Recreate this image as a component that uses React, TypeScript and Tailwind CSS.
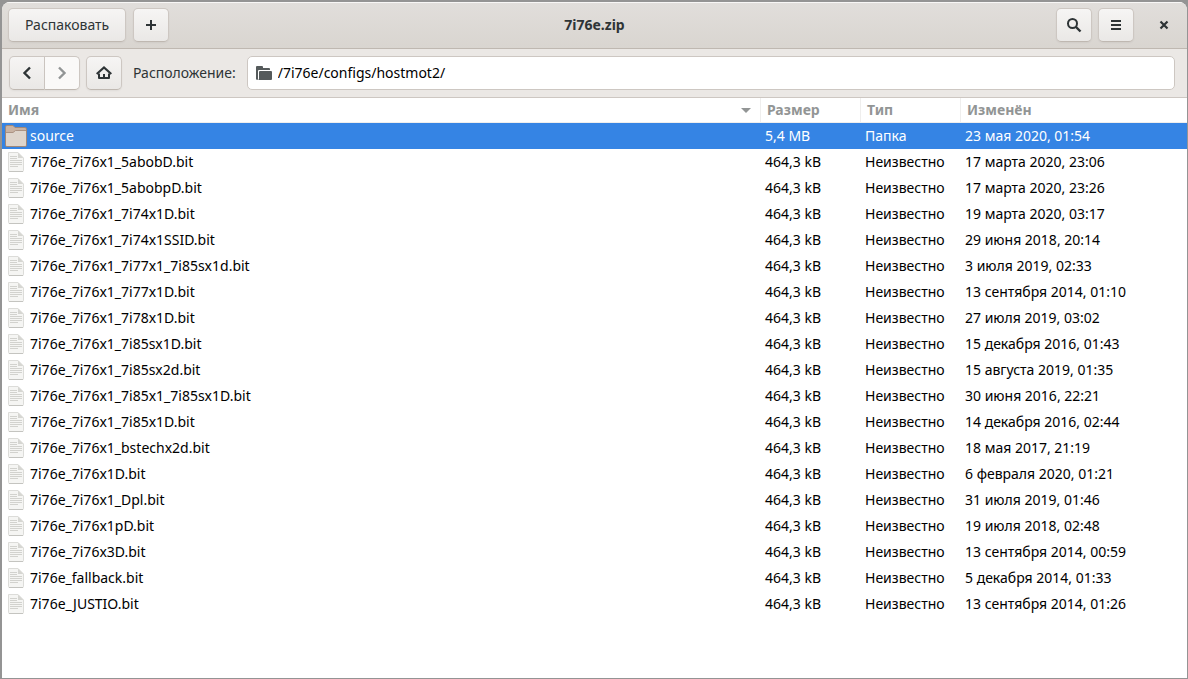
import type { ReactNode } from "react";

type FileEntry = { name: string; modified: string };

const files: FileEntry[] = [
  { name: "7i76e_7i76x1_5abobD.bit", modified: "17 марта 2020, 23:06" },
  { name: "7i76e_7i76x1_5abobpD.bit", modified: "17 марта 2020, 23:26" },
  { name: "7i76e_7i76x1_7i74x1D.bit", modified: "19 марта 2020, 03:17" },
  { name: "7i76e_7i76x1_7i74x1SSID.bit", modified: "29 июня 2018, 20:14" },
  { name: "7i76e_7i76x1_7i77x1_7i85sx1d.bit", modified: "3 июля 2019, 02:33" },
  { name: "7i76e_7i76x1_7i77x1D.bit", modified: "13 сентября 2014, 01:10" },
  { name: "7i76e_7i76x1_7i78x1D.bit", modified: "27 июля 2019, 03:02" },
  { name: "7i76e_7i76x1_7i85sx1D.bit", modified: "15 декабря 2016, 01:43" },
  { name: "7i76e_7i76x1_7i85sx2d.bit", modified: "15 августа 2019, 01:35" },
  { name: "7i76e_7i76x1_7i85x1_7i85sx1D.bit", modified: "30 июня 2016, 22:21" },
  { name: "7i76e_7i76x1_7i85x1D.bit", modified: "14 декабря 2016, 02:44" },
  { name: "7i76e_7i76x1_bstechx2d.bit", modified: "18 мая 2017, 21:19" },
  { name: "7i76e_7i76x1D.bit", modified: "6 февраля 2020, 01:21" },
  { name: "7i76e_7i76x1_Dpl.bit", modified: "31 июля 2019, 01:46" },
  { name: "7i76e_7i76x1pD.bit", modified: "19 июля 2018, 02:48" },
  { name: "7i76e_7i76x3D.bit", modified: "13 сентября 2014, 00:59" },
  { name: "7i76e_fallback.bit", modified: "5 декабря 2014, 01:33" },
  { name: "7i76e_JUSTIO.bit", modified: "13 сентября 2014, 01:26" },
];

const buttonLook =
  "flex h-[34px] items-center justify-center border border-[#cdc7c2] border-b-[#bfb8b1] bg-linear-to-b from-[#f6f5f4] to-[#eae8e6] shadow-xs";

function IconButton({
  label,
  className = "w-9 rounded-[5px]",
  disabled,
  children,
}: {
  label: string;
  className?: string;
  disabled?: boolean;
  children: ReactNode;
}) {
  return (
    <button
      type="button"
      aria-label={label}
      disabled={disabled}
      className={`${buttonLook} ${className}`}
    >
      <svg width="16" height="16" viewBox="0 0 16 16" fill="none" aria-hidden="true">
        {children}
      </svg>
    </button>
  );
}

function FolderIcon() {
  return (
    <svg width="22" height="22" viewBox="0 0 22 22" className="shrink-0" aria-hidden="true">
      <path d="M.5 20V2Q.5.5 2 .5H8L10 2.500H20Q21.500 2.500 21.500 4V20Q21.500 21.500 20 21.500H2Q.5 21.500.5 20Z" fill="#c9b3a3" stroke="#a08878" />
      <path d="M1 8.500Q1 7.500 2 7.500H8L10.500 5.500H20Q21 5.500 21 6.500V20Q21 21 20 21H2Q1 21 1 20Z" fill="#ded5cc" />
      <path d="M1 7.500H8L10.500 5.500H21" fill="none" stroke="#ab9383" />
    </svg>
  );
}

function DocumentIcon() {
  return (
    <svg width="22" height="22" viewBox="0 0 22 22" className="shrink-0" aria-hidden="true">
      <path d="M3.500 1.500H13L18.500 7V19.500Q18.500 20.500 17.500 20.500H4.500Q3.500 20.500 3.500 19.500Z" fill="#f5f5f3" stroke="#dcdcd9" />
      <path d="M13 1.500V7H18.500Z" fill="#d6d6d2" />
      <path d="M4 20.500H18" stroke="#c4c4c0" />
      <path d="M5 5.500H12M5 7.500H12M5 9.500H17M5 11.500H17M5 13.500H17M5 15.500H13" stroke="#d2d2ce" />
    </svg>
  );
}

export default function App() {
  return (
    <div className="flex h-screen flex-col bg-[#949494] pt-[2px] pr-px pb-px pl-[2px] font-['Noto_Sans',sans-serif] text-[14px] leading-5 text-[#2e3436]">
      <main className="flex min-h-0 flex-1 flex-col overflow-hidden rounded-t-lg bg-white">
        <header className="grid h-[47px] shrink-0 grid-cols-[1fr_auto_1fr] items-center border-t border-b border-t-[#f8f7f6] border-b-[#bfb8b1] bg-linear-to-b from-[#e1dedb] to-[#d9d5d0] px-[6px] pb-[2px]">
          <div className="flex gap-[7px]">
            <button type="button" className={`${buttonLook} rounded-[5px] px-4`}>
              Распаковать
            </button>
            <IconButton label="Добавить файлы">
              <path d="M8 3V13M3 8H13" stroke="#2e3436" strokeWidth="2" />
            </IconButton>
          </div>
          <h1 className="font-bold">7i76e.zip</h1>
          <div className="flex items-center justify-end gap-[6px]">
            <IconButton label="Найти">
              <circle cx="6.500" cy="6.500" r="4.500" stroke="#2e3436" strokeWidth="2" />
              <path d="M10 10L14.500 14.500" stroke="#2e3436" strokeWidth="2.400" />
            </IconButton>
            <IconButton label="Меню">
              <path d="M3 4H13M3 8H13M3 12H13" stroke="#2e3436" strokeWidth="2" />
            </IconButton>
            <button
              type="button"
              aria-label="Закрыть"
              className="ml-[7px] flex h-[34px] w-[34px] items-center justify-center"
            >
              <svg width="16" height="16" viewBox="0 0 16 16" aria-hidden="true">
                <path d="M4.500 4.500L11.500 11.500M11.500 4.500L4.500 11.500" stroke="#2e3436" strokeWidth="2.200" />
              </svg>
            </button>
          </div>
        </header>

        <nav className="flex h-[49px] shrink-0 items-center border-b border-[#cdc7c2] bg-[#ebe8e5] pr-3 pl-[7px]">
          <IconButton label="Назад" className="w-9 rounded-l-[5px]">
            <path d="M11 2.500L5.500 8L11 13.500" stroke="#2e3436" strokeWidth="2.400" />
          </IconButton>
          <IconButton
            label="Вперёд"
            disabled
            className="w-[35px] rounded-r-[5px] border-l-0 from-[#faf9f8] to-[#faf9f8]"
          >
            <path d="M5 2.500L10.500 8L5 13.500" stroke="#929595" strokeWidth="2.400" />
          </IconButton>
          <IconButton label="Домой" className="ml-[6px] w-9 rounded-[5px]">
            <path d="M.7 9L8 2.500L15.300 9" stroke="#2e3436" strokeWidth="2.200" />
            <path d="M3 8.500V13H13V8.500" stroke="#2e3436" strokeWidth="2" strokeLinejoin="round" />
            <path d="M7 9H9V13H7Z" fill="#2e3436" />
          </IconButton>
          <label htmlFor="location" className="ml-[11px] pb-px">
            Расположение:
          </label>
          <div className="ml-[11px] flex h-[34px] min-w-0 flex-1 items-center gap-[6px] rounded-[5px] border border-[#cdc7c2] bg-white px-2">
            <svg width="16" height="16" viewBox="0 0 16 16" className="shrink-0" aria-hidden="true">
              <path d="M0 2Q0 1 1 1H6Q7 1 7 2V3H13Q14 3 14 4V5H3Q2 5 2 6V14.500L1 15Q0 14.500 0 13.500Z" fill="#555a5b" />
              <path d="M3 7Q3 6 4 6H15Q16 6 16 7V14Q16 15 15 15H2Q3 14.500 3 13.500Z" fill="#555a5b" />
            </svg>
            <input
              id="location"
              type="text"
              defaultValue="/7i76e/configs/hostmot2/"
              className="min-w-0 flex-1 bg-transparent pb-px text-black outline-none"
            />
          </div>
        </nav>

        <div className="min-h-0 flex-1 overflow-hidden">
          <table className="w-full table-fixed border-separate border-spacing-0 text-left whitespace-nowrap text-black">
            <colgroup>
              <col />
              <col className="w-[100px]" />
              <col className="w-[100px]" />
              <col className="w-[226px]" />
            </colgroup>
            <thead className="text-[#929595]">
              <tr className="h-[25px]">
                <th scope="col" aria-sort="ascending" className="border-r border-b border-[#efeeed] p-0 pl-[6px]">
                  <div className="flex items-center justify-between pr-[9px]">
                    Имя
                    <svg width="10" height="5" viewBox="0 0 10 5" aria-hidden="true">
                      <path d="M0 0H10L5 5Z" fill="#929595" />
                    </svg>
                  </div>
                </th>
                <th scope="col" className="border-r border-b border-[#efeeed] p-0 pl-[6px]">Размер</th>
                <th scope="col" className="border-r border-b border-[#efeeed] p-0 pl-[6px]">Тип</th>
                <th scope="col" className="border-b border-[#efeeed] p-0 pl-[6px]">Изменён</th>
              </tr>
            </thead>
            <tbody>
              <tr className="h-[26px] bg-[#3584e4] text-white">
                <td className="p-0 pl-[3px]">
                  <div className="flex items-center gap-[3px]">
                    <FolderIcon />
                    source
                  </div>
                </td>
                <td className="p-0 pl-1">5,4 MB</td>
                <td className="p-0 pl-1">Папка</td>
                <td className="p-0 pl-1">23 мая 2020, 01:54</td>
              </tr>
              {files.map((file) => (
                <tr key={file.name} className="h-[26px]">
                  <td className="p-0 pl-[3px]">
                    <div className="flex items-center gap-[3px]">
                      <DocumentIcon />
                      {file.name}
                    </div>
                  </td>
                  <td className="p-0 pl-1">464,3 kB</td>
                  <td className="p-0 pl-1">Неизвестно</td>
                  <td className="p-0 pl-1">{file.modified}</td>
                </tr>
              ))}
            </tbody>
          </table>
        </div>
      </main>
    </div>
  );
}
